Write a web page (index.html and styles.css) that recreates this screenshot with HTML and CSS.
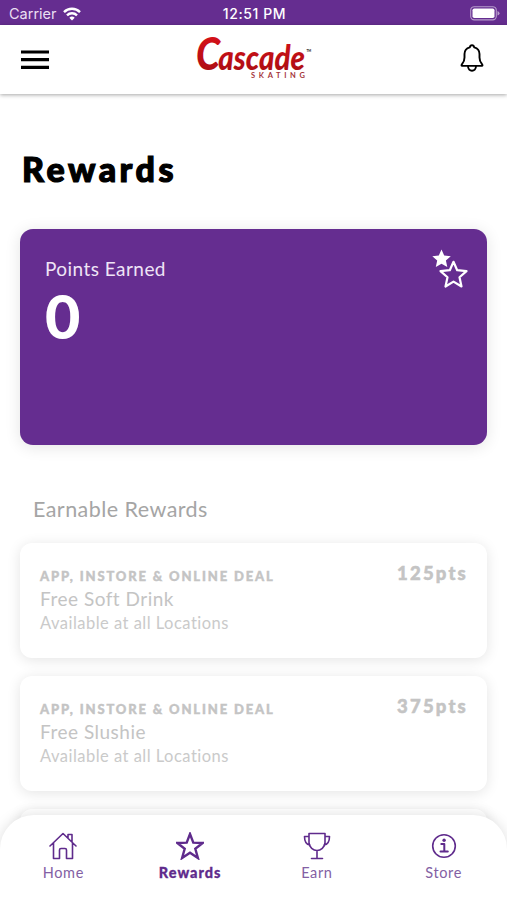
FILE: index.html
```
<!DOCTYPE html>
<html lang="en">
<head>
  <meta charset="UTF-8" />
  <meta name="viewport" content="width=device-width, initial-scale=1.0" />
  <title>Cascade Skating - Rewards</title>
  <link rel="stylesheet" href="styles.css">
</head>
<body>
  <div class="status-bar">
    <div class="carrier">
      <span>Carrier</span>
      <svg width="18" height="14" viewBox="0 0 18 14" fill="none" stroke="#fff" stroke-width="2.4">
        <path d="M1 5.1a11.3 11.3 0 0 1 16 0" />
        <path d="M4 8.3a7 7 0 0 1 10 0" />
        <path d="M6.3 10.8a3.8 3.8 0 0 1 5.4 0L9 13.6z" fill="#fff" stroke="none" />
      </svg>
    </div>
    <span class="time">12:51 PM</span>
    <svg class="battery" width="30" height="15" viewBox="0 0 30 15">
      <rect x="0.7" y="0.7" width="25.6" height="13.2" rx="3.6" fill="none" stroke="#b79ccb" stroke-width="1.1" />
      <rect x="2.5" y="2.5" width="22" height="9.6" rx="1.8" fill="#fff" />
      <path d="M27.5 5v4.6q2-.7 2-2.3t-2-2.3z" fill="#b79ccb" />
    </svg>
  </div>

  <header>
    <button class="icon-btn" aria-label="Menu">
      <svg width="28" height="20" viewBox="0 0 28 20" stroke="#000" stroke-width="3.2">
        <path d="M0 2h28M0 9.700h28M0 17.300h28" />
      </svg>
    </button>
    <svg class="logo" width="120" height="44" viewBox="0 0 120 44">
      <defs>
        <linearGradient id="red" x1="0" y1="0" x2="0" y2="1">
          <stop offset="0" stop-color="#e3121b" />
          <stop offset="1" stop-color="#a30d12" />
        </linearGradient>
      </defs>
      <text class="logo-name" x="2" y="35.500" fill="url(#red)" textLength="109" lengthAdjust="spacingAndGlyphs"><tspan font-size="46">C</tspan><tspan font-size="35" dx="-2">ascade</tspan></text>
      <text class="logo-sub" x="57" y="43.500" textLength="54">SKATING</text>
      <text class="logo-tm" x="112.500" y="18">TM</text>
    </svg>
    <button class="icon-btn" aria-label="Notifications">
      <svg width="26" height="28" viewBox="0 0 26 28" fill="none" stroke="#000" stroke-width="1.9" stroke-linejoin="round">
        <path d="M13 1.200c-1.300 0-2 .9-2.200 2.100C7.300 4.200 5.500 6.800 5.500 10v3.500c0 3-.8 4.800-2.400 6.500q-1.300 1.700.2 1.900h19.400q1.500-.2.2-1.900c-1.600-1.700-2.400-3.500-2.400-6.500V10c0-3.200-1.800-5.800-5.300-6.700C15 2.100 14.300 1.200 13 1.200z" />
        <path d="M9 22c0 6.300 8 6.300 8 0" />
      </svg>
    </button>
  </header>

  <main>
    <h1>Rewards</h1>

    <section class="points-card">
      <div>
        <div class="points-label">Points Earned</div>
        <div class="points-value">0</div>
      </div>
      <svg width="36" height="40" viewBox="0 0 36 40">
        <path d="M9.500 .5l2.700 6 6.600.7-4.900 4.400 1.400 6.500-5.800-3.300-5.700 3.300 1.400-6.500L.3 7.200l6.500-.7z" fill="#fff" />
        <path d="M21.500 12.800l3.700 8.400 9.300.9-7 6.200 2 9.200-8-4.900-8 4.900 2-9.200-7-6.200 9.300-.9z" fill="none" stroke="#fff" stroke-width="2.200" stroke-linejoin="round" />
      </svg>
    </section>

    <h2>Earnable Rewards</h2>

    <section class="rewards">
      <article class="reward">
        <div>
          <div class="reward-type">APP, INSTORE &amp; ONLINE DEAL</div>
          <div class="reward-name">Free Soft Drink</div>
          <div class="reward-place">Available at all Locations</div>
        </div>
        <div class="reward-points">125pts</div>
      </article>
      <article class="reward">
        <div>
          <div class="reward-type">APP, INSTORE &amp; ONLINE DEAL</div>
          <div class="reward-name">Free Slushie</div>
          <div class="reward-place">Available at all Locations</div>
        </div>
        <div class="reward-points">375pts</div>
      </article>
      <article class="reward"></article>
    </section>
  </main>

  <nav>
    <a class="tab">
      <svg viewBox="0 0 28 28">
        <path d="M1 14L14 1.500 27 14M4.500 11v15.500h6V18q0-1.500 1.500-1.500h4q1.500 0 1.500 1.500v8.500h6V11M19 6V2.500h4V10" />
      </svg>
      <span>Home</span>
    </a>
    <a class="tab active">
      <svg viewBox="0 0 28 28">
        <path d="M14 2l3.300 8.600 9.400.4-7.400 5.700 2.600 9.300-7.900-5.300L6.100 26l2.600-9.300L1.300 11l9.400-.4z" />
      </svg>
      <span>Rewards</span>
    </a>
    <a class="tab">
      <svg viewBox="0 0 28 28">
        <path d="M6 1.500h16v9c0 5-4.500 8-8 8s-8-3-8-8zM6 4.500H1.500c0 4.500 1.500 8 5.500 8.500M22 4.500h4.500c0 4.500-1.500 8-5.500 8.500M14 18.500v8M8.500 26.500h11" />
      </svg>
      <span>Earn</span>
    </a>
    <a class="tab">
      <svg viewBox="0 0 28 28">
        <circle cx="14" cy="14" r="11.300" />
        <path d="M11.300 12h3v7.300M10.500 19.600h7.300" stroke-width="2" />
        <circle cx="14.100" cy="8.300" r="1.700" fill="#5f2b8c" stroke="none" />
      </svg>
      <span>Store</span>
    </a>
  </nav>
</body>
</html>
```
FILE: styles.css
```
:root {
  --purple: #652d90;
  --muted: #c4c4c4;
}

* {
  box-sizing: border-box;
}

body {
  font-family: Lato, sans-serif;
  margin: 0;
  height: 100vh;
  display: flex;
  flex-direction: column;
  overflow: hidden;
  background-color: #fff;
  color: #000;
}

.status-bar {
  height: 25px;
  flex: none;
  padding: 2px 7px 0 9px;
  display: grid;
  grid-template-columns: 1fr auto 1fr;
  align-items: center;
  background-color: var(--purple);
  color: #fff;
  font-family: Inter, sans-serif;
  font-size: 14.5px;
}
.carrier {
  display: flex;
  align-items: center;
  gap: 6px;
  color: #eadff2;
}
.time {
  font-weight: 500;
  font-size: 14px;
  letter-spacing: 0.6px;
}
.battery {
  justify-self: end;
}

header {
  height: 69px;
  flex: none;
  padding: 0 22px 0 21px;
  display: flex;
  justify-content: space-between;
  align-items: center;
  box-shadow: 0 1px 4px rgba(0, 0, 0, 0.35);
}
.icon-btn {
  padding: 0;
  border: none;
  background: none;
  display: flex;
}
.icon-btn:last-child {
  margin-top: -3px;
}
.logo {
  overflow: visible;
  margin-bottom: 7px;
}
.logo-name {
  font-family: Lato, sans-serif;
  font-weight: 900;
  font-style: italic;
}
.logo-sub {
  font-size: 7.5px;
  font-weight: 700;
  fill: #a5353a;
}
.logo-tm {
  font-size: 3px;
  font-weight: 700;
}

main {
  flex: 1;
  min-height: 0;
  padding: 0 20px;
}
h1 {
  margin: 0;
  padding: 53px 0 0 2px;
  height: 135px;
  font-size: 34px;
  font-weight: 900;
  line-height: 44px;
  letter-spacing: 3.5px;
  -webkit-text-stroke: 1.2px #000;
}

.points-card {
  height: 216px;
  padding: 20px 19px 0 25px;
  display: flex;
  justify-content: space-between;
  align-items: flex-start;
  border-radius: 13px;
  background-color: var(--purple);
  color: #fff;
  box-shadow: 0 2px 16px rgba(0, 0, 0, 0.11);
}
.points-label {
  padding-top: 8px;
  font-size: 19px;
  line-height: 24px;
  letter-spacing: 0.45px;
  color: #efe4f6;
}
.points-value {
  font-size: 61px;
  font-weight: 900;
  line-height: 70px;
}

h2 {
  margin: 0;
  padding: 50px 13px 0;
  height: 98px;
  font-size: 21.5px;
  font-weight: 400;
  line-height: 28px;
  letter-spacing: 0.45px;
  color: #a5a5a5;
}

.rewards {
  display: flex;
  flex-direction: column;
  gap: 18px;
}
.reward {
  height: 115px;
  padding: 20px;
  display: flex;
  justify-content: space-between;
  border-radius: 12px;
  background-color: #fff;
  color: var(--muted);
  box-shadow: 0 2px 14px rgba(0, 0, 0, 0.11);
}
.reward-type {
  padding-top: 3px;
  font-size: 13px;
  font-weight: 900;
  line-height: 20px;
  letter-spacing: 1.85px;
  -webkit-text-stroke: 0.4px var(--muted);
}
.reward-name {
  font-size: 19px;
  line-height: 25px;
  letter-spacing: 0.5px;
}
.reward-place {
  font-size: 16.5px;
  line-height: 24px;
  letter-spacing: 0.48px;
  color: #cacaca;
}
.reward-points {
  font-size: 18.5px;
  font-weight: 900;
  line-height: 20px;
  letter-spacing: 2.2px;
  margin-right: -1px;
  -webkit-text-stroke: 0.5px var(--muted);
}

nav {
  position: relative;
  height: 85px;
  flex: none;
  padding-top: 17px;
  display: grid;
  grid-template-columns: repeat(4, 1fr);
  border-radius: 34px 34px 0 0;
  background-color: #fff;
  box-shadow: 0 0 14px rgba(0, 0, 0, 0.13);
}
.tab {
  display: flex;
  flex-direction: column;
  align-items: center;
  gap: 3px;
  font-size: 14.5px;
  line-height: 20px;
  letter-spacing: 0.6px;
  color: #8360a4;
}
.tab svg {
  width: 28px;
  height: 28px;
  fill: none;
  stroke: #5f2b8c;
  stroke-width: 1.6;
  stroke-linejoin: round;
  stroke-linecap: round;
}
.tab.active {
  font-weight: 900;
  letter-spacing: 1px;
  color: #5f2b8c;
  -webkit-text-stroke: 0.3px #5f2b8c;
}
.tab.active svg {
  stroke-width: 2.4;
  stroke-linejoin: miter;
}
```
